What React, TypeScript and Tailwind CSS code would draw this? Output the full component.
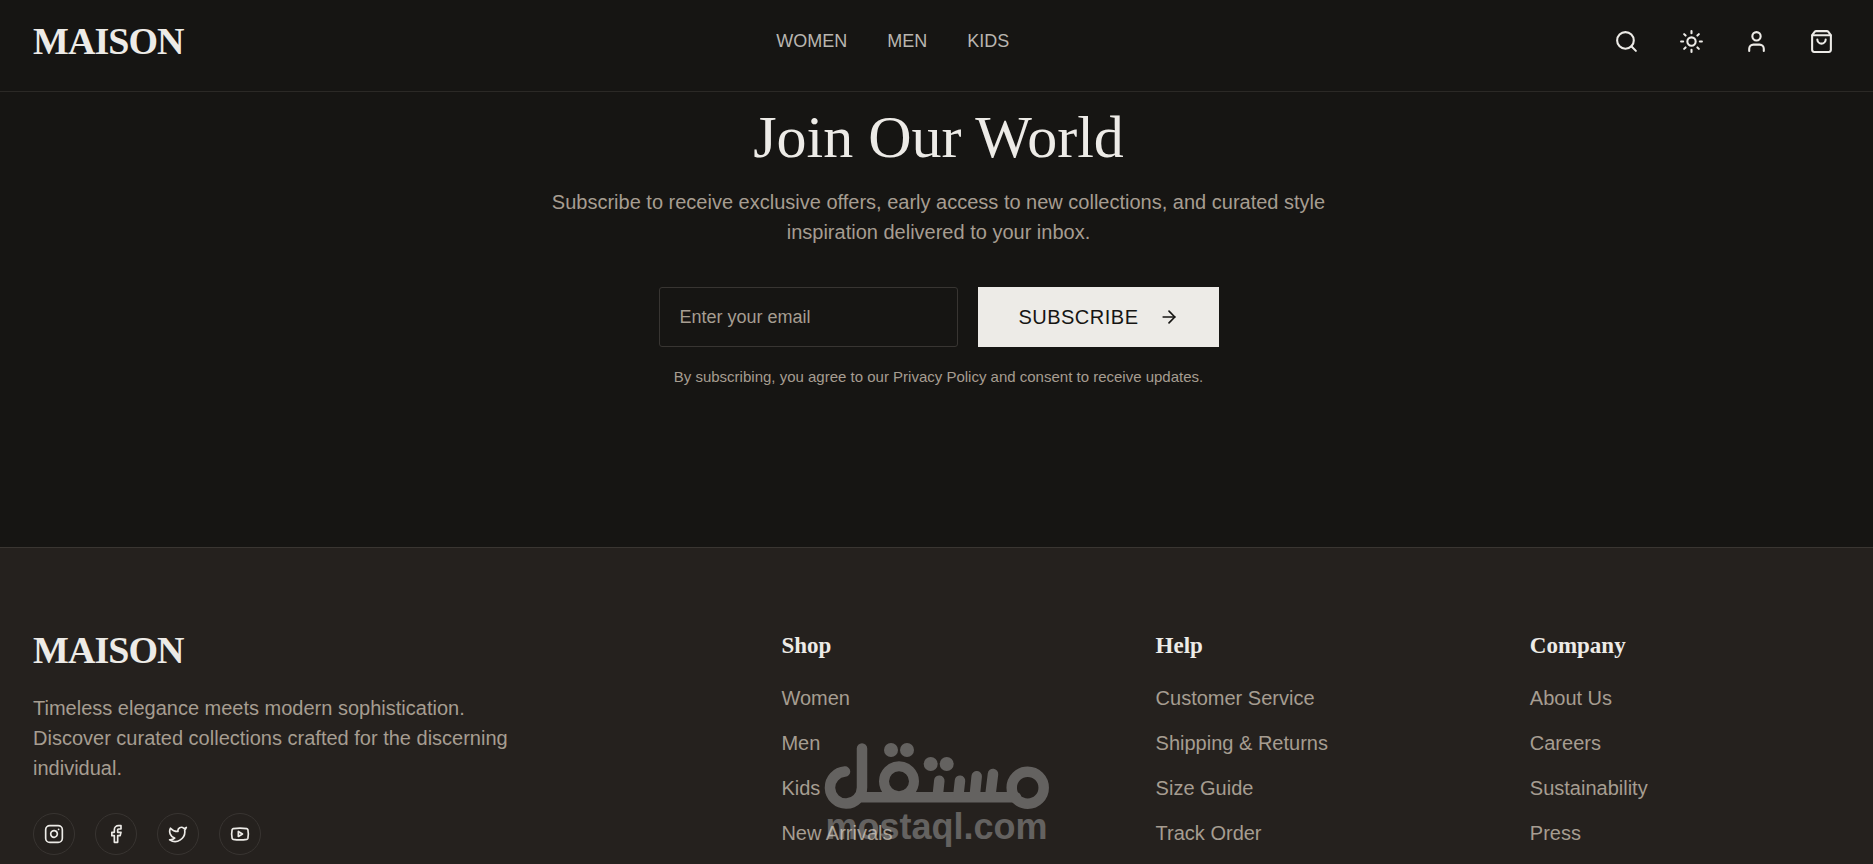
import { useState } from "react";
import { ArrowRight, Facebook, Instagram, Search, ShoppingBag, Sun, Twitter, User, Youtube } from "lucide-react";

interface linkColumn {
  title: string,
  links: string[]
}

const menu: string[] = ["WOMEN", "MEN", "KIDS"];

const columns: linkColumn[] = [
  { title: "Shop", links: ["Women", "Men", "Kids", "New Arrivals"] },
  { title: "Help", links: ["Customer Service", "Shipping & Returns", "Size Guide", "Track Order"] },
  { title: "Company", links: ["About Us", "Careers", "Sustainability", "Press"] }
];

const actions = [
  { label: "Search", Icon: Search },
  { label: "Toggle theme", Icon: Sun },
  { label: "Account", Icon: User },
  { label: "Cart", Icon: ShoppingBag }
];

const socials = [
  { label: "Instagram", Icon: Instagram },
  { label: "Facebook", Icon: Facebook },
  { label: "Twitter", Icon: Twitter },
  { label: "YouTube", Icon: Youtube }
];

function Brand() {
  return (
    <a href="#" className="block w-fit font-['Liberation_Serif',serif] text-[38px] leading-[45px] font-bold tracking-tight text-[#edebe7]">
      MAISON
    </a>
  )
}

function Header() {
  return (
    <header className="sticky top-0 z-10 flex h-[92px] items-start justify-between border-b border-[#2b2926] bg-[#161513] pt-[19px] pr-[26px] pl-[33px]">
      <Brand />
      <nav className="flex h-11 items-center gap-10">
        {menu.map((item: string) =>
          <a key={item} href="#" className="text-[18px] leading-6 font-medium text-[#b9b6b0]">{item}</a>
        )}
      </nav>
      <div className="flex h-11 items-center gap-[15px]">
        {actions.map(({ label, Icon }) =>
          <button key={label} aria-label={label} className="flex size-[50px] items-center justify-center text-[#edebe7]">
            <Icon size={25} strokeWidth={2} />
          </button>
        )}
      </div>
    </header>
  )
}

function Newsletter() {
  const [email, setEmail] = useState("");

  return (
    <section className="flex flex-col items-center pt-[9px] pr-8 pb-[160px] pl-9 text-center">
      <h2 className="font-['Liberation_Serif',serif] text-[60px] leading-[72px] text-[#edebe7]">Join Our World</h2>
      <p className="mt-[14px] max-w-[800px] text-[20px] leading-[30px] text-[#a69d91]">
        Subscribe to receive exclusive offers, early access to new collections, and curated style inspiration delivered to your inbox.
      </p>
      <form className="mt-10 flex w-full max-w-[560px] gap-5" onSubmit={(e) => e.preventDefault()}>
        <input
          type="email"
          aria-label="Email"
          placeholder="Enter your email"
          value={email}
          onChange={(e) => setEmail(e.target.value)}
          className="h-[60px] min-w-0 flex-1 rounded-[3px] border border-[#383532] bg-transparent px-5 text-[18px] text-[#edebe7] placeholder:text-[#a69d91]"
        />
        <button type="submit" className="flex h-[60px] items-center gap-5 bg-[#edebe7] px-10 text-[20px] tracking-wide text-[#161513]">
          SUBSCRIBE
          <ArrowRight size={20} strokeWidth={2} />
        </button>
      </form>
      <p className="mt-5 text-[15px] leading-5 text-[#a69d91]">
        By subscribing, you agree to our Privacy Policy and consent to receive updates.
      </p>
    </section>
  )
}

function Footer() {
  return (
    <footer className="border-t border-[#3a3632] bg-[#25211e] px-[33px] pt-20 pb-[9px]">
      <div className="grid grid-cols-5 gap-16">
        <div className="col-span-2">
          <Brand />
          <p className="mt-5 max-w-[500px] text-[20px] leading-[30px] text-[#a69d91]">
            Timeless elegance meets modern sophistication. Discover curated collections crafted for the discerning individual.
          </p>
          <div className="mt-[30px] flex gap-5">
            {socials.map(({ label, Icon }) =>
              <a key={label} href="#" aria-label={label} className="flex size-[42px] items-center justify-center rounded-full border border-[#383431] text-[#edebe7]">
                <Icon size={20} />
              </a>
            )}
          </div>
        </div>
        {columns.map((column: linkColumn) =>
          <div key={column.title}>
            <h3 className="font-['Liberation_Serif',serif] text-[23px] leading-[35px] font-bold text-[#edebe7]">{column.title}</h3>
            <ul className="mt-5 space-y-[15px] text-[20px] leading-[30px] text-[#a69d91]">
              {column.links.map((link: string) =>
                <li key={link}>
                  <a href="#">{link}</a>
                </li>
              )}
            </ul>
          </div>
        )}
      </div>
    </footer>
  )
}

// mostaql.com mark, laid over the page
function Watermark() {
  return (
    <div className="pointer-events-none absolute bottom-[19px] left-1/2 z-20 w-[226px] -translate-x-1/2 text-[#dadada] opacity-35">
      <svg viewBox="0 0 226 67" className="block w-full" fill="none" stroke="currentColor" strokeWidth="10.5" strokeLinecap="round" strokeLinejoin="round">
        <path d="M21 29.600A16 16 0 1 0 38 45.500V6.500M35 55.300H192" />
        <circle cx="75" cy="39.300" r="15" strokeWidth="10" />
        <path d="M115.300 38.700L113.700 54M136 38.700L134.300 54M152.700 34.300L150.700 54M169 32L166.300 54" />
        <circle cx="203.700" cy="45.700" r="16" />
        <g fill="currentColor" stroke="none">
          <circle cx="67" cy="8" r="7" />
          <circle cx="83" cy="8" r="7" />
          <circle cx="106.700" cy="22" r="7" />
          <circle cx="122.700" cy="22" r="7" />
        </g>
      </svg>
      <p className="text-center text-[36px] leading-9 font-bold">mostaql.com</p>
    </div>
  )
}

export default function App() {
  return (
    <div className="relative min-h-screen overflow-hidden bg-[#161513] font-['Liberation_Sans',Arial,sans-serif]">
      <Header />
      <Newsletter />
      <Footer />
      <Watermark />
    </div>
  )
};
